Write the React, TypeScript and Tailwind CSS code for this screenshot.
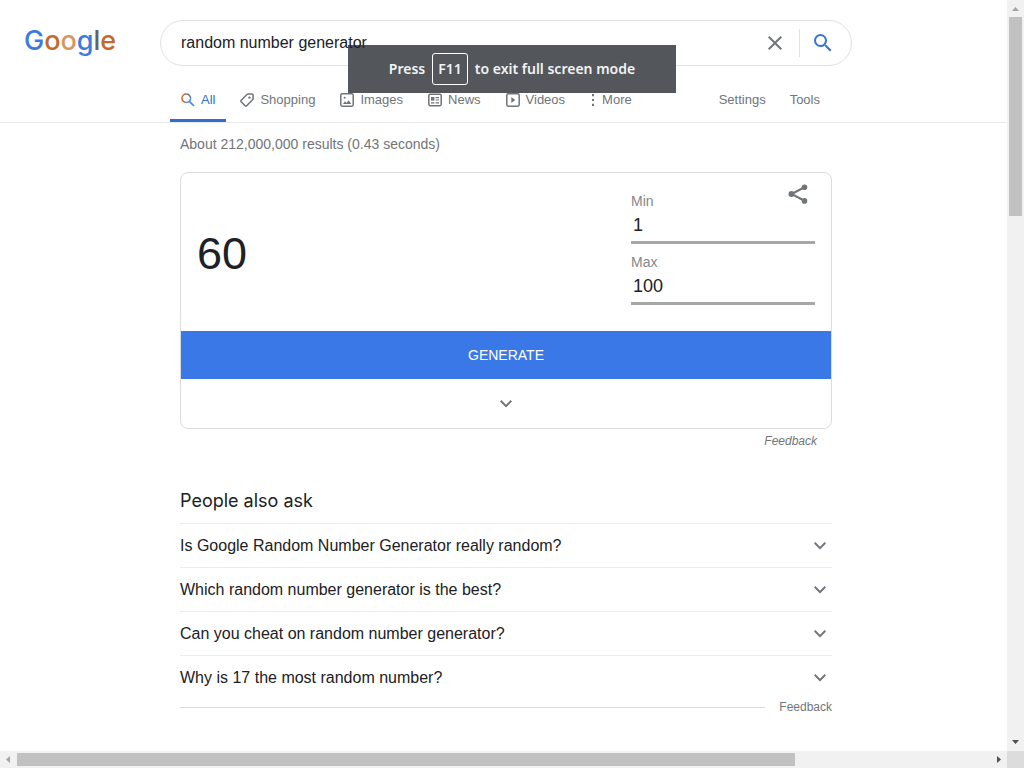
import { useState } from "react";
import type { ReactNode } from "react";

const questions = [
  "Is Google Random Number Generator really random?",
  "Which random number generator is the best?",
  "Can you cheat on random number generator?",
  "Why is 17 the most random number?",
];

function Chevron() {
  return (
    <svg viewBox="0 0 24 24" className="size-6 shrink-0" fill="#70757a" aria-hidden="true">
      <path d="M7.41 8.09 12 12.67l4.59-4.58L18 9.5l-6 6-6-6z" />
    </svg>
  );
}

function AllIcon() {
  return (
    <svg viewBox="0 0 14 14" className="size-3.5" fill="none" strokeWidth="1.5" aria-hidden="true">
      <path d="M8.6 8.6 13 13" stroke="#4285f4" strokeWidth="1.7" />
      <path d="M5.3 1a4.3 4.3 0 0 1 4.3 4.3" stroke="#70757a" />
      <path d="M9.6 5.3a4.3 4.3 0 0 1-4.3 4.3" stroke="#4285f4" />
      <path d="M5.3 9.6A4.3 4.3 0 0 1 5.3 1" stroke="#c5682a" />
    </svg>
  );
}

function TagIcon() {
  return (
    <svg viewBox="0 0 14 14" className="size-3.5" fill="none" stroke="#70757a" strokeWidth="1.5" aria-hidden="true">
      <path d="M7.2 1.2 1.2 7.3a1.1 1.1 0 0 0 0 1.5l3.9 4a1.1 1.1 0 0 0 1.6 0l6-6.2c.2-.2.4-.5.4-.8V2.3c0-.7-.5-1.2-1.2-1.2L8 .9c-.3 0-.6.1-.8.3z" />
      <circle cx="9.5" cy="4.6" r="1.2" fill="#70757a" stroke="none" />
    </svg>
  );
}

function ImageIcon() {
  return (
    <svg viewBox="0 0 14 14" className="size-3.5" fill="none" stroke="#70757a" strokeWidth="1.5" aria-hidden="true">
      <rect x=".8" y=".8" width="12.4" height="12.4" rx="1.4" />
      <path d="m2.9 11 2.2-2.8 1.5 1.7 2.1-2.7 2.6 3.8z" fill="#70757a" stroke="none" />
      <circle cx="4.6" cy="4.8" r="1" fill="#70757a" stroke="none" />
    </svg>
  );
}

function NewsIcon() {
  return (
    <svg viewBox="0 0 14 14" className="size-3.5" fill="none" stroke="#70757a" strokeWidth="1.5" aria-hidden="true">
      <rect x=".8" y="1.3" width="12.4" height="11.4" rx="1.4" />
      <path d="M3 4h3.4v3.6H3z" fill="#70757a" stroke="none" />
      <path d="M7.6 4.6H11M7.6 7H11M3 9.8h3.4M7.6 9.8H11" strokeWidth="1.2" />
    </svg>
  );
}

function VideoIcon() {
  return (
    <svg viewBox="0 0 14 14" className="size-3.5" fill="none" stroke="#70757a" strokeWidth="1.5" aria-hidden="true">
      <rect x=".8" y=".8" width="12.4" height="12.4" rx="1.4" />
      <path d="M5.3 4v6l4-3z" fill="#70757a" stroke="none" />
    </svg>
  );
}

function MoreIcon() {
  return (
    <svg viewBox="0 0 6 14" className="h-3.5 w-1.5" fill="#70757a" aria-hidden="true">
      <path d="M2 1h2v2.2H2zM2 5.9h2v2.2H2zM2 10.8h2V13H2z" />
    </svg>
  );
}

function Tab({ icon, label, active = false }: { icon: ReactNode; label: string; active?: boolean }) {
  return (
    <a
      href="#"
      className={
        active
          ? "flex items-center gap-1.5 border-b-[3px] border-[#2f6fc9] px-[11px] text-[#2f6fc9]"
          : "flex items-center gap-1.5 border-b-[3px] border-transparent px-[11px]"
      }
    >
      {icon}
      {label}
    </a>
  );
}

function Field({ id, label, value, onChange }: { id: string; label: string; value: string; onChange: (v: string) => void }) {
  return (
    <div className="flex flex-col">
      <label htmlFor={id} className="text-sm leading-5 text-[#84888b]">
        {label}
      </label>
      <input
        id={id}
        value={value}
        onChange={(e) => onChange(e.target.value)}
        className="h-[33px] w-full border-b-[3px] border-[#a6a8a8] px-0.5 pb-0.5 text-lg text-[#202124] outline-none"
      />
    </div>
  );
}

export default function App() {
  const [query, setQuery] = useState("random number generator");
  const [min, setMin] = useState("1");
  const [max, setMax] = useState("100");
  const [result, setResult] = useState(60);

  const generate = () => {
    const lo = Number(min);
    const hi = Number(max);
    setResult(lo + Math.floor(Math.random() * (hi - lo + 1)));
  };

  return (
    <div className="relative flex h-screen flex-col bg-white font-['Liberation_Sans',Arial,sans-serif] text-[#202124]">
      <div className="flex min-h-0 flex-1">
        <div className="min-w-0 flex-1 overflow-hidden">
          <header className="border-b border-[#e8eaed] pt-5">
            <div className="flex items-center">
              <a
                href="#"
                aria-label="Google"
                className="w-40 shrink-0 pb-1 pl-6 font-['Inter',sans-serif] text-[27px] leading-10 font-medium"
              >
                <span className="text-[#3c7ae0]">G</span>
                <span className="text-[#c5682a]">o</span>
                <span className="text-[#d9965a]">o</span>
                <span className="text-[#3c7ae0]">g</span>
                <span className="text-[#60646a]">l</span>
                <span className="text-[#c5682a]">e</span>
              </a>
              <form
                onSubmit={(e) => e.preventDefault()}
                className="flex h-[46px] w-full max-w-[692px] items-center rounded-full border border-[#dfe1e5] pr-1 pl-5"
              >
                <input
                  aria-label="Search"
                  value={query}
                  onChange={(e) => setQuery(e.target.value)}
                  className="relative z-20 min-w-0 flex-1 bg-transparent text-base text-[#202124] outline-none"
                />
                <button type="button" aria-label="Clear" onClick={() => setQuery("")} className="px-3">
                  <svg viewBox="0 0 24 24" className="size-6" fill="#70757a" aria-hidden="true">
                    <path d="M19 6.41 17.59 5 12 10.59 6.41 5 5 6.41 10.59 12 5 17.59 6.41 19 12 13.41 17.59 19 19 17.59 13.41 12z" />
                  </svg>
                </button>
                <button type="submit" aria-label="Search" className="flex h-7 items-center border-l border-[#dfe1e5] pr-3 pl-[11px]">
                  <svg viewBox="0 0 24 24" className="size-6" fill="#3574d6" aria-hidden="true">
                    <path d="M15.5 14h-.79l-.28-.27A6.47 6.47 0 0 0 16 9.5 6.5 6.5 0 1 0 9.5 16c1.61 0 3.09-.59 4.23-1.57l.27.28v.79l5 4.99L20.49 19zm-6 0C7.01 14 5 11.99 5 9.5S7.01 5 9.5 5 14 7.01 14 9.5 11.99 14 9.5 14z" />
                  </svg>
                </button>
              </form>
            </div>
            <div className="ml-[170px] flex h-14 max-w-[662px] justify-between pt-3.5 text-[13px] text-[#70757a]">
              <nav className="flex gap-[3px]">
                <Tab icon={<AllIcon />} label="All" active />
                <Tab icon={<TagIcon />} label="Shopping" />
                <Tab icon={<ImageIcon />} label="Images" />
                <Tab icon={<NewsIcon />} label="News" />
                <Tab icon={<VideoIcon />} label="Videos" />
                <Tab icon={<MoreIcon />} label="More" />
              </nav>
              <div className="flex items-center gap-6 border-b-[3px] border-transparent pr-3">
                <button type="button">Settings</button>
                <button type="button">Tools</button>
              </div>
            </div>
          </header>

          <main className="ml-[180px] max-w-[652px]">
            <p className="pt-[11px] text-sm leading-5 text-[#70757a]">About 212,000,000 results (0.43 seconds)</p>

            <section className="mt-[18px] overflow-hidden rounded-lg border border-[#dadce0]">
              <div className="flex h-[158px] justify-between px-4">
                <output className="self-center pt-0.5 text-[45px] leading-none">{result}</output>
                <div className="relative flex w-[184px] flex-col gap-2 pt-[18px]">
                  <Field id="min" label="Min" value={min} onChange={setMin} />
                  <Field id="max" label="Max" value={max} onChange={setMax} />
                  <button type="button" aria-label="Share" className="absolute top-2.5 right-[5px]">
                    <svg viewBox="0 0 24 24" className="size-6" fill="#70757a" stroke="#70757a" aria-hidden="true">
                      <path d="M18 4.500 5.500 11 18 17.500" fill="none" strokeWidth="2" />
                      <circle cx="18.5" cy="4.3" r="2.8" stroke="none" />
                      <circle cx="5.5" cy="11" r="3" stroke="none" />
                      <circle cx="18.5" cy="17.9" r="2.8" stroke="none" />
                    </svg>
                  </button>
                </div>
              </div>
              <button type="button" onClick={generate} className="block h-12 w-full bg-[#3b78e7] text-sm text-white">
                GENERATE
              </button>
              <button type="button" aria-label="Show more" className="flex h-[49px] w-full items-center justify-center">
                <Chevron />
              </button>
            </section>
            <div className="flex justify-end pt-1 pr-[15px] text-xs leading-4 text-[#70757a] italic">
              <a href="#">Feedback</a>
            </div>

            <section className="pt-10">
              <h2 className="pb-2.5 font-['Inter',sans-serif] text-lg leading-6">People also ask</h2>
              <ul>
                {questions.map((q) => (
                  <li key={q} className="border-t border-[#ebebeb]">
                    <button type="button" className="flex h-[43px] w-full items-center justify-between text-left text-base">
                      {q}
                      <Chevron />
                    </button>
                  </li>
                ))}
              </ul>
              <div className="flex items-center gap-3.5 text-xs leading-4 text-[#70757a]">
                <hr className="flex-1 border-[#dadce0]" />
                <a href="#">Feedback</a>
              </div>
            </section>
          </main>
        </div>

        <div className="flex w-[17px] shrink-0 flex-col items-center justify-between bg-[#f1f1f1]" aria-hidden="true">
          <div className="flex w-full flex-col items-center">
            <svg viewBox="0 0 17 17" className="size-[17px]" fill="#a3a3a3">
              <path d="M5 11h7L8.5 7z" />
            </svg>
            <div className="h-[199px] w-[13px] bg-[#c1c1c1]" />
          </div>
          <svg viewBox="0 0 17 17" className="size-[17px]" fill="#505050">
            <path d="M5 6h7l-3.5 4z" />
          </svg>
        </div>
      </div>

      <div className="flex h-[17px] shrink-0 items-center bg-[#f1f1f1]" aria-hidden="true">
        <svg viewBox="0 0 17 17" className="size-[17px]" fill="#a3a3a3">
          <path d="M10 5v7L6 8.500z" />
        </svg>
        <div className="flex-1">
          <div className="h-[13px] w-4/5 bg-[#c1c1c1]" />
        </div>
        <svg viewBox="0 0 17 17" className="size-[17px]" fill="#505050">
          <path d="M7 5v7l4-3.500z" />
        </svg>
        <div className="size-[17px] bg-[#dcdcdc]" />
      </div>

      <div className="absolute top-[45px] left-1/2 z-10 flex h-12 w-[328px] -translate-x-1/2 items-center justify-center gap-[7px] bg-[#53565b] font-['Noto_Sans',sans-serif] text-sm font-semibold whitespace-nowrap text-[#f1f3f4]">
        Press
        <kbd className="flex h-8 items-center rounded-[3px] border border-white px-[5px] font-['Noto_Sans',sans-serif]">F11</kbd>
        to exit full screen mode
      </div>
    </div>
  );
}
